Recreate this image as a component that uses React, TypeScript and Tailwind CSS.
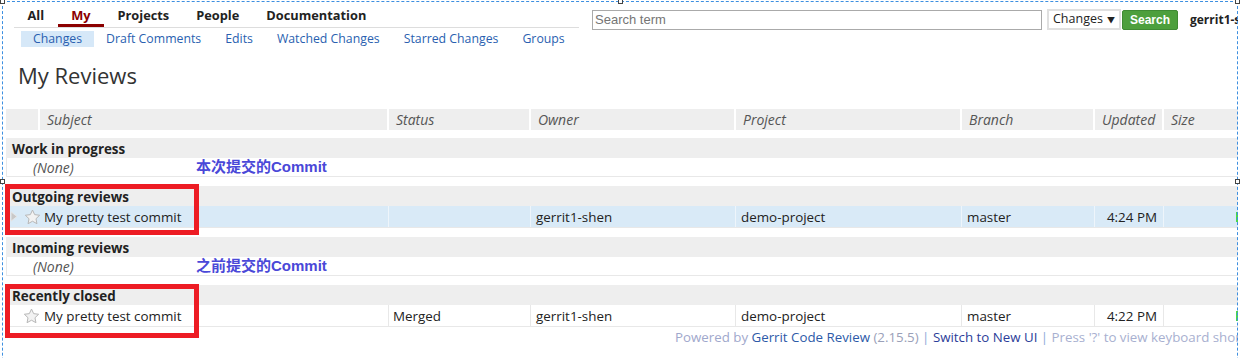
import React from "react";

const COLS = "grid-cols-[34px_349px_142px_205px_226px_133px_69px_130px]";

function Star() {
  return (
    <svg width="17" height="16" viewBox="0 0 24 23" className="shrink-0">
      <path
        d="M12 1.5l3.1 6.6 7.2.9-5.3 5 1.4 7.1L12 17.6l-6.4 3.5 1.4-7.1-5.3-5 7.2-.9z"
        fill="#f2f2f2"
        stroke="#b5b5b5"
        strokeWidth="1.4"
        strokeLinejoin="round"
      />
    </svg>
  );
}

function Tri() {
  return (
    <svg width="8" height="11" viewBox="0 0 8 11" className="shrink-0">
      <path d="M1 0.8L7 5.5L1 10.2Z" fill="#c8c8c8" stroke="#e6e6e6" strokeWidth="1" />
    </svg>
  );
}

function HeaderRow() {
  const labels = ["", "Subject", "Status", "Owner", "Project", "Branch", "Updated", "Size"];
  return (
    <div className={`grid ${COLS} h-[20px]`}>
      {labels.map((l, i) => (
        <div
          key={i}
          className="bg-[#eeeeee] border-r-2 border-white pl-[7px] italic text-[#555] text-[14px] leading-[21px] whitespace-nowrap"
        >
          {l}
        </div>
      ))}
    </div>
  );
}

function Section({ title }: { title: string }) {
  return (
    <div className="h-[20px] bg-[#eeeeee] pl-[6px] font-bold text-[13.4px] leading-[22px] text-[#222] whitespace-nowrap">
      {title}
    </div>
  );
}

function NoneRow({ note }: { note: string }) {
  return (
    <div className="relative h-[19px] border-l border-b border-[#e8e8e8] pl-[26px] italic text-[14px] leading-[20px] text-[#555]">
      (None)
      <span className="absolute left-[189px] top-[0px] not-italic font-bold text-[15px] leading-[18px] text-[#4a48d8] font-['Liberation_Sans','Noto_Sans_CJK_SC',sans-serif] whitespace-nowrap">
        {note}
      </span>
    </div>
  );
}

function DataRow({
  highlight,
  status,
  time,
  showTri,
}: {
  highlight?: boolean;
  status: string;
  time: string;
  showTri?: boolean;
}) {
  const bg = highlight ? "bg-[#d9eaf7]" : "bg-white";
  const br = highlight ? "border-[#eef5fb]" : "border-[#e8e8e8]";
  const cell = `border-r ${br} text-[13.4px] leading-[23px] text-[#222] whitespace-nowrap overflow-hidden`;
  return (
    <div className={`grid ${COLS} h-[22px] ${bg} border-b border-[#e8e8e8]`}>
      <div className="flex items-center pl-[4px] gap-[6px]">
        {showTri ? <Tri /> : <span className="w-[8px]" />}
        <Star />
      </div>
      <div className={`${cell} pl-[4px]`}>My pretty test commit</div>
      <div className={`${cell} pl-[4px]`}>{status}</div>
      <div className={`${cell} pl-[5px]`}>gerrit1-shen</div>
      <div className={`${cell} pl-[5px]`}>demo-project</div>
      <div className={`${cell} pl-[5px]`}>master</div>
      <div className={`${cell} text-right pr-[6px]`}>{time}</div>
      <div className="relative">
        <span className="absolute left-[72px] top-[6px] w-[2px] h-[10px] bg-[#4cd64c]" />
      </div>
    </div>
  );
}

export default function App() {
  return (
    <div className="relative w-[1243px] h-[358px] bg-white overflow-hidden font-['Open_Sans','Noto_Sans_CJK_SC',sans-serif]">
      <div className="w-[1238px] h-[358px] overflow-hidden">
        <div className="w-[1300px]">
          {/* top bar */}
          <div className="flex items-start">
            <div className="ml-[14px] w-[565px]">
              <div className="flex border-b border-[#dddddd] text-[12.8px] font-bold text-[#222]">
                {["All", "My", "Projects", "People", "Documentation"].map((m) => (
                  <div
                    key={m}
                    className={`px-[13.5px] pt-[7px] leading-[17px] border-b-[3px] ${
                      m === "My" ? "border-[#8b0000] text-[#8b0000]" : "border-transparent"
                    }`}
                  >
                    {m}
                  </div>
                ))}
              </div>
              <div className="flex pl-[7px] pt-[3px] text-[12.3px] text-[#2a5fb0]">
                {["Changes", "Draft Comments", "Edits", "Watched Changes", "Starred Changes", "Groups"].map(
                  (s) => (
                    <div
                      key={s}
                      className={`px-[12px] h-[16px] leading-[16px] whitespace-nowrap ${
                        s === "Changes" ? "bg-[#d6e8f8]" : ""
                      }`}
                    >
                      {s}
                    </div>
                  )
                )}
              </div>
            </div>
            <div className="ml-[13px] mt-[9px] flex items-center">
              <div className="w-[450px] h-[20px] border border-[#aaaaaa] pl-[2px] text-[13px] leading-[18px] text-[#757575] font-['Liberation_Sans',sans-serif]">
                Search term
              </div>
              <div className="ml-[5px] w-[74px] h-[21px] border-2 border-[#e0e0e0] flex items-center justify-between pl-[4px] pr-[4px] text-[12.5px] text-[#222]">
                <span>Changes</span>
                <span className="text-[8px]">▼</span>
              </div>
              <div className="ml-[1px] w-[56px] h-[20px] rounded-[2px] bg-[#4d9f3d] border border-[#3f8a33] flex items-center justify-center text-white font-bold text-[12px] font-['Liberation_Sans',sans-serif]">
                Search
              </div>
              <div className="ml-[12px] font-bold text-[12px] text-[#222] whitespace-nowrap">gerrit1-shen</div>
            </div>
          </div>

          <h1 className="pl-[18px] mt-[13px] text-[22px] leading-[30px] text-[#333] font-normal">My Reviews</h1>

          {/* table */}
          <div className="ml-[6px] mt-[19px]">
            <HeaderRow />
            <div className="mt-[9px]">
              <Section title="Work in progress" />
              <NoneRow note="本次提交的Commit" />
            </div>
            <div className="mt-[9px]">
              <Section title="Outgoing reviews" />
              <DataRow highlight showTri status="" time="4:24 PM" />
            </div>
            <div className="mt-[9px]">
              <Section title="Incoming reviews" />
              <NoneRow note="之前提交的Commit" />
            </div>
            <div className="mt-[9px]">
              <Section title="Recently closed" />
              <DataRow status="Merged" time="4:22 PM" />
            </div>
          </div>

          <div className="pl-[675px] mt-[1px] text-[13.3px] leading-[18px] whitespace-nowrap">
            <span className="text-[#9fa8cc]">Powered by </span>
            <span className="text-[#2d5aa8]">Gerrit Code Review</span>
            <span className="text-[#9aa0b8]"> (2.15.5) </span>
            <span className="text-[#8fa8d8]">|</span>
            <span className="text-[#2b3d99]"> Switch to New UI </span>
            <span className="text-[#8fa8d8]">|</span>
            <span className="text-[#a8b0d0]"> Press '?' to view keyboard shortcuts</span>
          </div>
        </div>
      </div>

      {/* red annotation boxes */}
      <div className="absolute left-[5px] top-[184px] w-[194px] h-[51px] border-[5px] border-[#ed1c24]" />
      <div className="absolute left-[5px] top-[284px] w-[194px] h-[54px] border-[5px] border-[#ed1c24]" />

      {/* selection frame */}
      <div className="absolute left-[2px] top-[1px] w-[1236px] h-[420px] border border-dashed border-[#3d8fe0]" />
      <div className="absolute left-[0px] top-[-1px] w-[5px] h-[5px] bg-white border border-[#444]" />
      <div className="absolute left-[618px] top-[-1px] w-[5px] h-[5px] bg-white border border-[#444]" />
      <div className="absolute left-[1235px] top-[-1px] w-[5px] h-[5px] bg-white border border-[#444]" />
      <div className="absolute left-[0px] top-[179px] w-[5px] h-[5px] bg-white border border-[#444]" />
      <div className="absolute left-[1235px] top-[179px] w-[5px] h-[5px] bg-white border border-[#444]" />
    </div>
  );
}
